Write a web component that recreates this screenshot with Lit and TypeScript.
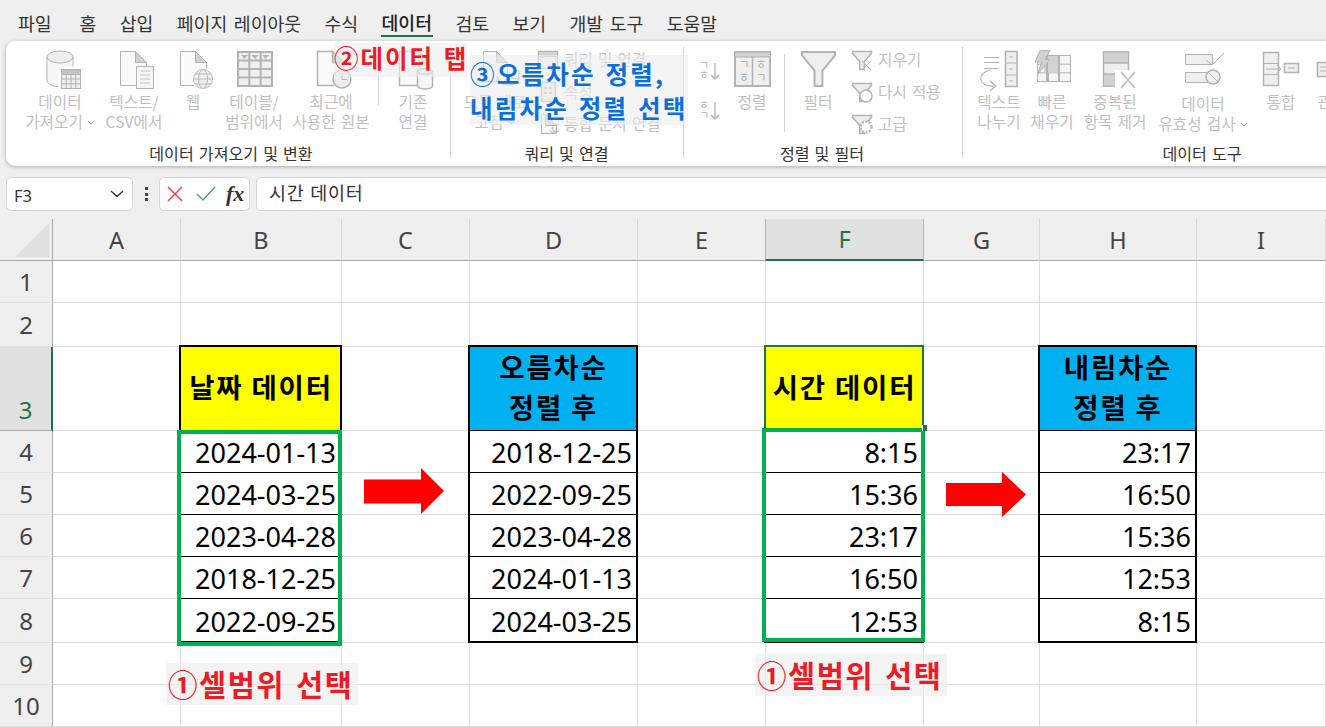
import { LitElement, html, css, svg, nothing } from "lit";
import { customElement } from "lit/decorators.js";

const S = "#b3b3b3";
const L = "#efefef";
const D = "#d2d2d2";
const H = "#c4c4c4";

const grid = (x: number, y: number, w: number, h: number, cols: number, rows: number, fill = L) => {
  const lines = [];
  for (let i = 1; i < cols; i++) lines.push(svg`<path d="M${x + (w * i) / cols} ${y}v${h}"/>`);
  for (let i = 1; i < rows; i++) lines.push(svg`<path d="M${x} ${y + (h * i) / rows}h${w}"/>`);
  return svg`<rect x=${x} y=${y} width=${w} height=${h} fill=${fill}/>${lines}`;
};
const doc = (x: number, y: number, w: number, h: number) => svg`
  <path fill="#fafafa" d="M${x} ${y}H${x + w - 11}L${x + w} ${y + 11}V${y + h}H${x}Z"/>
  <path fill=${D} d="M${x + w - 11} ${y}V${y + 11}H${x + w}Z"/>`;
const cyl = (x: number, y: number, w: number, h: number, ry: number) => svg`
  <path fill="#f7f7f7" d="M${x} ${y + ry}V${y + h - ry}C${x} ${y + h + ry / 2} ${x + w} ${y + h + ry / 2} ${x + w} ${y + h - ry}V${y + ry}Z"/>
  <ellipse fill=${L} cx=${x + w / 2} cy=${y + ry} rx=${w / 2} ry=${ry}/>`;
const funnel = (x: number, y: number, w: number, h: number) => {
  const m = x + w / 2;
  const n = w * 0.12;
  return svg`<path fill=${L} d="M${x} ${y}H${x + w}V${y + h * 0.1}L${m + n} ${y + h * 0.55}V${y + h}H${m - n}V${y + h * 0.55}L${x} ${y + h * 0.1}Z"/>`;
};

const icons: Record<string, unknown> = {
  data: svg`${cyl(47, 51, 26, 35, 6)}
    <g stroke="#fff" stroke-width="3"><rect x="60" y="68" width="22" height="22" fill="#fff"/></g>
    ${grid(61.5, 69.5, 19, 19, 4, 4)}<rect x="61.5" y="69.5" width="19" height="5" fill=${H}/>`,
  text: svg`${doc(120.5, 51.5, 26, 34)}<rect x="136.5" y="66.5" width="17" height="22" fill="#f5f5f5"/>
    <path stroke=${H} d="M140 71h10M140 75h10M140 79h10M140 83h10"/>`,
  web: svg`${doc(180.5, 51.5, 26, 34)}<circle cx="203" cy="79" r="11" fill="#fff" stroke="none"/>
    <g stroke="#bbb"><circle cx="203" cy="79" r="9.5" fill=${L}/><ellipse cx="203" cy="79" rx="4.5" ry="9.5" fill="none"/><path d="M193.5 79h19M195 74h16M195 84h16"/></g>`,
  table: svg`<g stroke-width="2">${grid(238, 52, 34, 34, 3, 4)}</g>
    <path fill=${S} stroke="none" d="M241 55h7l-3.500 4ZM251.500 55h7l-3.500 4ZM262 55h7l-3.500 4Z"/>`,
  recent: svg`<g stroke-width="1.500">${doc(317.5, 51.5, 26, 34)}</g><circle cx="342" cy="79" r="10.500" fill="#fff" stroke="none"/>
    <circle cx="342" cy="79" r="9" fill=${L} stroke-width="1.500"/><path d="M342 73v6.500h5"/>`,
  conn: svg`<g stroke-width="1.500">${doc(401.5, 51.5, 30, 34)}</g><g stroke-width="1.500">${cyl(419.5, 68.5, 15, 20, 3)}</g>`,
  refresh: svg`${doc(483.5, 51.5, 24, 30)}<path fill="none" d="M497 76a12 12 0 0 0 22 3M519 70l0 9-8-1" stroke-width="1.500"/>`,
  split: svg`<path d="M984 57.500h15M984 62.500h15M984 68.500h15"/><rect x="1005.500" y="51.500" width="11.500" height="35" fill=${L} stroke-width="1.500"/>
    <path d="M1005 63h12M1005 75h12M1009 57h4M1009 69h4M1009 81h4"/>
    <path fill="none" d="M990 70C977 73 977 87 994 86M990 81l6 5-6 5" stroke-width="1.200"/>`,
  flash: svg`${grid(1037.5, 55.5, 33, 26, 3, 3, "#f6f6f6")}<path fill=${D} stroke="none" d="M1044 56h14v17h-14Z"/>
    <path stroke-width="2" fill="none" d="M1047 55v27M1059 55v27"/>
    <path fill=${D} d="M1040 50.500h10l-5 9h5l-12 14.500 3.500-12h-6.500Z"/>`,
  dupe: svg`<rect x="1103.500" y="52" width="25" height="34" fill=${L} stroke-width="1.500"/><rect x="1103.500" y="52" width="25" height="11" fill=${D}/><rect x="1103.500" y="74" width="25" height="12" fill=${D}/>
    <path d="M1104 63h24M1104 74h24"/><path fill="#fff" stroke="none" d="M1115 70h20v19h-20Z"/><path stroke="#bdbdbd" stroke-width="1.500" d="M1121 72l14 16M1135 72l-14 16"/>`,
  valid: svg`<path fill=${L} d="M1185.500 54.500h27v10h-27ZM1185.500 72.500h27v10h-27Z"/><circle cx="1213" cy="77" r="7" fill=${L} stroke-width="1.500"/><path d="M1208 72l10 10"/>
    <path fill="none" d="M1206 60l6 5 12-12"/>`,
  cons: svg`<rect x="1263.500" y="52.500" width="15" height="33" fill=${L} stroke-width="1.500"/><path d="M1263 63.500h15M1263 74.500h15M1266 69h14M1277 65l4 4-4 4"/>
    <rect x="1284.500" y="63.500" width="14" height="9" fill=${L} stroke-width="1.500"/><path d="M1288 68h7"/>`,
  rel: svg`<rect x="1317.500" y="62.500" width="14" height="14" fill=${L} stroke-width="1.500"/><path d="M1320 67h8M1320 71h8"/>`,
};

const smallIcons: Record<string, unknown> = {
  query: svg`<rect x="538.500" y="51.500" width="19" height="17" fill=${L} stroke-width="1.500"/><rect x="538.500" y="51.500" width="19" height="5" fill=${D}/>`,
  props: svg`<rect x="541.500" y="82.500" width="14" height="19" fill=${L} stroke-width="1.500"/><path stroke-width="2" d="M544 88h3M549 88h3M544 93h3M549 93h3"/>`,
  links: svg`${doc(541.5, 114.5, 15, 19)}<path fill="none" d="M559 125a4 4 0 1 0 0 6M556 128a2 2 0 1 1-6 2"/>`,
  clear: svg`<g stroke-width="1.500">${funnel(852.5, 51.5, 19, 18)}</g><path d="M862 61l9 9M871 61l-9 9"/>`,
  reapply: svg`<g stroke-width="1.500">${funnel(852.5, 83.5, 19, 18)}</g><circle cx="866" cy="96" r="6" fill="#fff" stroke-width="1.500"/>`,
  adv: svg`<g stroke-width="1.500">${funnel(852.5, 115.5, 19, 18)}</g><circle cx="866" cy="127" r="5.500" fill="#fff" stroke-width="2.500" stroke-dasharray="2 1.500"/>`,
};

const chev = html`<svg class="chev" width="8" height="5" viewBox="0 0 8 5"><path d="M1 1l3 3 3-3" fill="none" stroke="#999"/></svg>`;

type B = { x: number; w: number; l1: string; l2?: string; ic: string; more?: boolean; low?: boolean };
type Sm = { x: number; y: number; t: string; ic: string; w: number };

const g1: B[] = [
  { x: 22, w: 76, l1: "데이터", l2: "가져오기", ic: "data", more: true },
  { x: 98, w: 72, l1: "텍스트/", l2: "CSV에서", ic: "text" },
  { x: 170, w: 46, l1: "웹", ic: "web" },
  { x: 216, w: 76, l1: "테이블/", l2: "범위에서", ic: "table" },
  { x: 292, w: 78, l1: "최근에", l2: "사용한 원본", ic: "recent" },
];
const g1b: B[] = [{ x: 390, w: 50, l1: "기존", l2: "연결", ic: "conn" }];
const g4: B[] = [
  { x: 973, w: 52, l1: "텍스트", l2: "나누기", ic: "split" },
  { x: 1025, w: 54, l1: "빠른", l2: "채우기", ic: "flash" },
  { x: 1079, w: 72, l1: "중복된", l2: "항목 제거", ic: "dupe" },
  { x: 1151, w: 104, l1: "데이터", l2: "유효성 검사", ic: "valid", more: true, low: true },
  { x: 1255, w: 52, l1: "통합", ic: "cons" },
  { x: 1307, w: 50, l1: "관계", ic: "rel" },
];

const cols = ["A", "B", "C", "D", "E", "F", "G", "H", "I"];
const rowsN = [1, 2, 3, 4, 5, 6, 7, 8, 9, 10];

type C = { t: string; k: string };
const tbl = (col: string, head: string, k: string, vals: string[]): Record<string, C> => {
  const o: Record<string, C> = { [`${col}3`]: { t: head, k } };
  vals.forEach((v, i) => (o[`${col}${i + 4}`] = { t: v, k: i === 4 ? "num last" : "num" }));
  return o;
};
const cells: Record<string, C> = {
  ...tbl("B", "날짜 데이터", "hd yel", ["2024-01-13", "2024-03-25", "2023-04-28", "2018-12-25", "2022-09-25"]),
  ...tbl("D", "오름차순\n정렬 후", "hd blu", ["2018-12-25", "2022-09-25", "2023-04-28", "2024-01-13", "2024-03-25"]),
  ...tbl("F", "시간 데이터", "hd yel act", ["8:15", "15:36", "23:17", "16:50", "12:53"]),
  ...tbl("H", "내림차순\n정렬 후", "hd blu", ["23:17", "16:50", "15:36", "12:53", "8:15"]),
};

@customElement("app-root")
export class AppRoot extends LitElement {
  static styles = css`
    :host { display: block; width: 1326px; height: 727px; overflow: hidden; position: relative; background: #efefef;
      font-family: "Noto Sans CJK KR", "Noto Sans", sans-serif; }
    .tabs { display: flex; height: 41px; padding-left: 18px; gap: 23.400px; font-size: 18.300px; word-spacing: 2.500px; color: #333; align-items: flex-start; box-sizing: border-box; }
    .tab { height: 37px; line-height: 46px; white-space: pre; box-sizing: border-box; }
    .tab:first-child { margin-right: 4.500px; }
    .tab.on { font-weight: 500; border-bottom: 2.500px solid #217346; color: #222; padding: 2px 1px 0; margin: 0 -1px; line-height: 41px; height: 37px; }
    .ribbon { display: flex; margin-left: 6px; width: 1340px; height: 125px; background: #fff; border-radius: 9px 0 0 9px;
      box-shadow: 0 1px 4px rgba(0,0,0,.28); }
    .group { display: flex; flex-direction: column; height: 125px; padding-top: 2px; box-sizing: border-box; flex: none; }
    .g1 { width: 444px; } .g2 { width: 232px; } .g3 { width: 278px; } .g4 { flex: 1; }
    .gsep { width: 1px; height: 111px; margin-top: 6px; background: #d4d4d4; flex: none; }
    .content { display: flex; height: 100px; }
    .g1 .content { padding-left: 16px; } .g2 .content { padding-left: 9px; } .g3 .content { padding-left: 8px; } .g4 .content { padding-left: 10px; }
    .label { height: 20px; line-height: 20px; text-align: center; font-size: 16.100px; color: #333; word-spacing: 1.500px; white-space: pre; }
    .g1 .label { padding-left: 6px; } .g3 .label { padding-right: 2px; } .g2 .label { padding-right: 1px; }
    .g4 .label { width: 478px; }
    .btn { display: flex; flex-direction: column; align-items: center; padding-top: 7px; flex: none; box-sizing: border-box; }
    .btn svg.ic, .small svg, .sort svg { display: block; flex: none; }
    .btn svg.ic { margin-bottom: 2px; }
    .t { font-size: 15.700px; line-height: 20px; height: 20px; color: #bfbfbf; white-space: nowrap; word-spacing: 1.500px; display: flex; align-items: center; gap: 4px; }
    .t.low { position: relative; top: 2px; }
    .vsep { width: 1px; background: #d4d4d4; flex: none; }
    .v1 { height: 55px; margin: 7px 9px 0 8px; } .v2 { height: 78px; margin: 11px 7px 0 6px; }
    .small { display: flex; flex-direction: column; flex: none; }
    .srow { display: flex; height: 32px; align-items: center; gap: 5px; white-space: nowrap; font-size: 15.700px; color: #bfbfbf; word-spacing: 1.500px; }
    .sort { flex: none; }
    .fbar { display: flex; align-items: stretch; height: 34px; margin-top: 11px; margin-bottom: 8px; padding-left: 6px; }
    .box { background: #fff; border: 1px solid #d4d4d4; border-radius: 5px; box-sizing: border-box; display: flex; align-items: center; flex: none; }
    .name { width: 127px; padding: 0 8px 0 7px; justify-content: space-between; font: 16.500px "Noto Sans", sans-serif; color: #333; }
    .name span { margin-top: 2px; }
    .dots { width: 26px; display: flex; flex-direction: column; align-items: center; justify-content: center; gap: 2.500px; flex: none; }
    .dots i { width: 3px; height: 3px; background: #444; display: block; }
    .fx { width: 91px; padding-left: 7px; gap: 13px; }
    .fxt { font: italic bold 22px "Liberation Serif", serif; color: #333; margin-left: -3px; }
    .input { margin-left: 6px; width: 1090px; padding: 0 0 5px 12px; font-size: 18.500px; color: #333; border-radius: 5px 0 0 5px; word-spacing: 1px; letter-spacing: .7px; }
    .sheet { display: grid; grid-template-columns: 53px 128px 161px 128px 168px 128px 158px 116px 157px 129px;
      grid-template-rows: 42px 42px 44px 84px 42px 42px 42px 42px 44px 42px 42px; background: #fff; position: relative; }
    .cell { border-right: 1px solid #dcdcdc; border-bottom: 1px solid #dcdcdc; box-sizing: border-box; position: relative; display: flex; align-items: center; justify-content: flex-end; min-width: 0; }
    .corner { background: #efefef; border-right: 1px solid #a9a9a9; border-bottom: 1px solid #a9a9a9; box-sizing: border-box; display: flex; align-items: flex-end; justify-content: flex-end; padding: 0 3px 3px 0; }
    .tri { width: 34px; height: 34px; background: #dfdfdf; clip-path: polygon(100% 0, 100% 100%, 0 100%); }
    .ch { background: #efefef; border-right: 1px solid #d8d8d8; border-bottom: 1px solid #a9a9a9; box-sizing: border-box; display: flex; align-items: center; justify-content: center;
      font: 23.500px "Noto Sans", sans-serif; color: #444; }
    .ch.sel { background: #e1e1e1; color: #217346; border-bottom: 2px solid #217346; border-right-color: #b5b5b5; border-left: 1px solid #b5b5b5; margin-left: -1px; }
    .rh { background: #efefef; border-right: 1px solid #a9a9a9; border-bottom: 1px solid #e2e2e2; box-sizing: border-box; display: flex; align-items: center; justify-content: center;
      font: 24px "Noto Sans", sans-serif; color: #444; }
    .rh.sel { background: #e1e1e1; color: #217346; border-right: 2px solid #217346; align-items: flex-end; border-bottom-color: #a9a9a9; padding-bottom: 4px; }
    .num { font: 27px "Noto Sans", sans-serif; color: #000; padding: 2px 5px 0 0; line-height: 1; }
    .num::after, .hd::after { content: ""; position: absolute; box-sizing: border-box; pointer-events: none; }
    .num::after { inset: 0 -1px -1px -2px; border-left: 2px solid #000; border-right: 2px solid #000; border-bottom: 1px solid #000; }
    .num.last::after { border-bottom-width: 2px; bottom: -1px; }
    .hd { font-weight: 700; font-size: 27.500px; letter-spacing: 1.800px; color: #000; justify-content: center; text-align: center; white-space: pre; line-height: 40px; padding-bottom: 6px; }
    .hd::after { inset: -2px -1px -1px -2px; border: 2px solid #000; border-bottom-width: 1px; }
    .hd.act::after { border-color: #217346; }
    .yel { background: #ff0; } .blu { background: #00b0f0; }
    .sel-box { position: absolute; border: 4px solid #00b050; box-sizing: border-box; }
    .sb1 { left: 177px; top: 211px; width: 165px; height: 216px; }
    .sb2 { left: 762px; top: 209px; width: 163px; height: 214px; }
    .handle { position: absolute; left: 922px; top: 206px; width: 4px; height: 6px; background: #217346; border-left: 1px solid #fff; }
    .arrow { position: absolute; display: block; }
    .a1 { left: 364px; top: 249px; } .a2 { left: 946px; top: 253px; }
    .note { position: absolute; background: rgba(238,238,238,.62); font-weight: 700; white-space: pre; box-sizing: border-box; }
    .n2 { left: 334px; top: 43px; width: 133px; height: 34px; color: #ed1c24; font-size: 24.500px; letter-spacing: 2px; word-spacing: 2px; line-height: 30px; }
    .n3 { left: 470px; top: 55px; width: 218px; height: 70px; color: #0a6fd8; font-size: 24.500px; letter-spacing: 2.200px; word-spacing: 2px; line-height: 33.500px; padding-top: 2px; }
    .n1 { width: 192px; height: 42px; color: #ed1c24; font-size: 29.500px; letter-spacing: 1.500px; word-spacing: 3px; line-height: 41px; padding-left: 2px; }
    .na { left: 166px; top: 663px; } .nb { left: 755px; top: 654px; }
  `;

  private btn(b: B) {
    return html`<div class="btn" style="width:${b.w}px">
      <svg class="ic" width=${b.w} height="40" viewBox="${b.x} 50 ${b.w} 40" stroke=${S} fill="none" overflow="visible">${icons[b.ic]}</svg>
      <div class="t ${b.low ? "low" : ""}">${b.l1}${b.l2 ? nothing : b.more ? chev : nothing}</div>
      ${b.l2 ? html`<div class="t ${b.low ? "low" : ""}">${b.l2}${b.more ? chev : nothing}</div>` : nothing}
    </div>`;
  }

  private small(s: Sm) {
    return html`<div class="srow"><svg width=${s.w} height="32" viewBox="${s.x} ${s.y} ${s.w} 32" stroke=${S} fill="none" overflow="visible">${smallIcons[s.ic]}</svg><span>${s.t}</span></div>`;
  }

  render() {
    const tabs = ["파일", "홈", "삽입", "페이지 레이아웃", "수식", "데이터", "검토", "보기", "개발 도구", "도움말"];
    return html`
      <div class="tabs">${tabs.map((t) => html`<div class="tab ${t === "데이터" ? "on" : ""}">${t}</div>`)}</div>
      <div class="ribbon">
        <div class="group g1">
          <div class="content">${g1.map((b) => this.btn(b))}<div class="vsep v1"></div>${g1b.map((b) => this.btn(b))}</div>
          <div class="label">데이터 가져오기 및 변환</div>
        </div>
        <div class="gsep"></div>
        <div class="group g2">
          <div class="content">
            <div class="btn" style="width:70px;margin-right:7px">
              <svg class="ic" width="70" height="40" viewBox="460 50 70 40" stroke=${S} fill="none" overflow="visible">${icons.refresh}</svg>
              <div class="t">모두 새로</div><div class="t">고침${chev}</div>
            </div>
            <div class="small">
              ${this.small({ x: 537, y: 43, w: 22, t: "쿼리 및 연결", ic: "query" })}
              ${this.small({ x: 537, y: 75, w: 22, t: "속성", ic: "props" })}
              ${this.small({ x: 537, y: 107, w: 22, t: "통합 문서 연결", ic: "links" })}
            </div>
          </div>
          <div class="label">쿼리 및 연결</div>
        </div>
        <div class="gsep"></div>
        <div class="group g3">
          <div class="content">
            <svg class="sort" width="34" height="96" viewBox="692 43 34 96" fill="none" stroke=${S}>
              <g font-size="11" fill="#b5b5b5" stroke="none" font-family="Noto Sans CJK KR" text-anchor="middle">
                <text x="704" y="69">ㄱ</text><text x="704" y="79">ㅎ</text><text x="704" y="109">ㅎ</text><text x="704" y="119">ㄱ</text>
              </g>
              <path stroke-width="1.300" d="M715 63v16M711 75l4 4 4-4M715 102v17M711 115l4 4 4-4"/>
            </svg>
            <div class="btn" style="width:52px">
              <svg class="ic" width="52" height="40" viewBox="726 50 52 40" stroke=${S} fill="none">
                <rect x="735" y="52" width="35" height="34" fill=${L} stroke-width="2"/><rect x="735" y="52" width="35" height="5" fill=${D}/><path stroke-width="1.500" d="M752.500 57v29"/>
                <g font-size="12" fill="#b0b0b0" stroke="none" font-family="Noto Sans CJK KR" text-anchor="middle">
                  <text x="744" y="69">ㄱ</text><text x="744" y="82">ㅎ</text><text x="761" y="69">ㅎ</text><text x="761" y="82">ㄱ</text>
                </g>
              </svg>
              <div class="t">정렬</div>
            </div>
            <div class="vsep v2"></div>
            <div class="btn" style="width:52px;margin-right:8px">
              <svg class="ic" width="52" height="40" viewBox="792 50 52 40" stroke=${S} fill="none" stroke-width="2">${funnel(802, 52, 33, 34)}</svg>
              <div class="t">필터</div>
            </div>
            <div class="small">
              ${this.small({ x: 852, y: 43, w: 21, t: "지우기", ic: "clear" })}
              ${this.small({ x: 852, y: 75, w: 21, t: "다시 적용", ic: "reapply" })}
              ${this.small({ x: 852, y: 107, w: 21, t: "고급", ic: "adv" })}
            </div>
          </div>
          <div class="label">정렬 및 필터</div>
        </div>
        <div class="gsep"></div>
        <div class="group g4">
          <div class="content">${g4.map((b) => this.btn(b))}</div>
          <div class="label">데이터 도구</div>
        </div>
      </div>
      <div class="fbar">
        <div class="box name"><span>F3</span><svg width="14" height="8" viewBox="0 0 14 8"><path d="M1 1l6 5.500L13 1" fill="none" stroke="#333" stroke-width="1.300"/></svg></div>
        <div class="dots"><i></i><i></i><i></i></div>
        <div class="box fx">
          <svg width="16" height="16" viewBox="0 0 16 16"><path d="M1 1l14 14M15 1L1 15" stroke="#e8474c" stroke-width="1.500"/></svg>
          <svg width="20" height="16" viewBox="0 0 20 16"><path d="M1 8l6 6L19 1" fill="none" stroke="#4ba46a" stroke-width="1.500"/></svg>
          <span class="fxt">fx</span>
        </div>
        <div class="box input">시간 데이터</div>
      </div>
      <div class="sheet">
        <div class="corner"><div class="tri"></div></div>
        ${cols.map((c) => html`<div class="ch ${c === "F" ? "sel" : ""}">${c}</div>`)}
        ${rowsN.map(
          (r) => html`<div class="rh ${r === 3 ? "sel" : ""}">${r}</div>
            ${cols.map((c) => {
              const v = cells[`${c}${r}`];
              return html`<div class="cell ${v ? v.k : ""}">${v ? v.t : nothing}</div>`;
            })}`
        )}
        <div class="sel-box sb1"></div>
        <div class="sel-box sb2"></div>
        <div class="handle"></div>
        <svg class="arrow a1" width="80" height="46" viewBox="0 0 80 46"><path fill="#f00" d="M0 11.500H57V0L80 23 57 46V35.500H0Z"/></svg>
        <svg class="arrow a2" width="80" height="45" viewBox="0 0 80 45"><path fill="#f00" d="M0 11H56V0L80 22.500 56 45V34H0Z"/></svg>
      </div>
      <div class="note n2">②데이터 탭</div>
      <div class="note n3">③오름차순 정렬,
내림차순 정렬 선택</div>
      <div class="note n1 na">①셀범위 선택</div>
      <div class="note n1 nb">①셀범위 선택</div>
    `;
  }
}
